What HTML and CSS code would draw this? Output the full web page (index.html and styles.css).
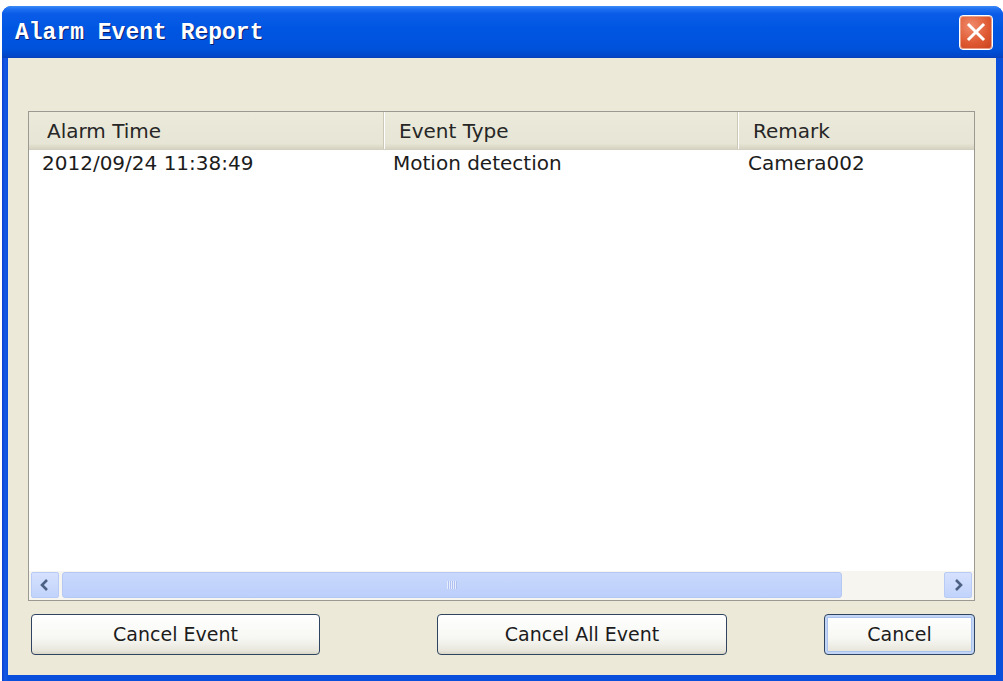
FILE: index.html
```html
<!DOCTYPE html>
<html>

<head>
  <title>Alarm Event Report</title>
  <link rel="stylesheet" href="styles.css">
</head>

<body>
  <div class="window">
    <div class="titlebar">
      <span class="title">Alarm Event Report</span>
      <button class="close" aria-label="Close">
        <svg width="20" height="20" viewBox="0 0 20 20">
          <path d="M3 3 L17 17 M17 3 L3 17" stroke="#fff" stroke-width="3" stroke-linecap="square"/>
        </svg>
      </button>
    </div>

    <div class="client">
      <div class="listview">
        <div class="list-head">
          <div class="col col-time">Alarm Time</div>
          <div class="col col-type">Event Type</div>
          <div class="col col-remark">Remark</div>
        </div>

        <div class="list-body">
          <div class="row">
            <div class="cell cell-time">2012/09/24 11:38:49</div>
            <div class="cell cell-type">Motion detection</div>
            <div class="cell cell-remark">Camera002</div>
          </div>
        </div>

        <div class="hscroll">
          <div class="sb-btn">
            <svg width="10" height="12" viewBox="0 0 10 12">
              <path d="M7 1 L2 6 L7 11" fill="none" stroke="#4d6185" stroke-width="2.6"/>
            </svg>
          </div>
          <div class="sb-thumb"><span class="grip"></span></div>
          <div class="sb-track"></div>
          <div class="sb-btn">
            <svg width="10" height="12" viewBox="0 0 10 12">
              <path d="M3 1 L8 6 L3 11" fill="none" stroke="#4d6185" stroke-width="2.6"/>
            </svg>
          </div>
        </div>
      </div>

      <div class="actions">
        <button class="btn btn-event">Cancel Event</button>
        <button class="btn btn-all">Cancel All Event</button>
        <button class="btn btn-cancel focused">Cancel</button>
      </div>
    </div>
  </div>
</body>

</html>
```

FILE: styles.css
```css
html {
  background-color: #fff;
}

body {
  margin: 0;
  font: 20px/1 "DejaVu Sans", sans-serif;
  color: #1c1c1c;
}

.window {
  margin: 6px 0 0 2px;
  width: 1001px;
  height: 675px;
  display: flex;
  flex-direction: column;
  background: linear-gradient(to right, #0a3fd0, #1458e4 3px, #0a4fdc 6px);
  border-radius: 9px 9px 0 0;
  overflow: hidden;
}

.titlebar {
  height: 52px;
  flex: none;
  display: flex;
  align-items: center;
  justify-content: space-between;
  padding: 0 10px 0 13px;
  background: linear-gradient(to bottom, #3b8cf6 0, #1e6ff0 3px, #0a5ce8 8px, #0056e2 22px, #0052dc 42px, #0048cc 49px, #0a3fb8 52px);
}

.title {
  font: bold 23px/1 "Liberation Mono", monospace;
  color: #fff;
  text-shadow: 1px 1px 0 #0a1e6e;
  margin-top: 2px;
}

.close {
  width: 34px;
  height: 35px;
  padding: 0;
  display: flex;
  align-items: center;
  justify-content: center;
  border: 1px solid #fff;
  border-radius: 4px;
  background: radial-gradient(circle at 35% 30%, #f08a6c, #df5a33 55%, #c8401c);
  box-shadow: inset 0 0 0 1px #e9a08a;
}

.client {
  flex: 1;
  margin: 0 7px 6px 6px;
  padding: 53px 21px 0 20px;
  background-color: #ece9d8;
  display: flex;
  flex-direction: column;
}

.listview {
  height: 490px;
  box-sizing: border-box;
  border: 1px solid #9a9a92;
  background-color: #fff;
  display: flex;
  flex-direction: column;
}

.list-head,
.row {
  display: grid;
  grid-template-columns: 354px 354px 1fr;
}

.list-head {
  height: 37px;
  background: linear-gradient(to bottom, #ebeadb, #e7e5d5 85%, #d6d3c2);
  border-bottom: 1px solid #d2d0c1;
}

.col {
  display: flex;
  align-items: center;
  padding-left: 15px;
  border-left: 1px solid #cbc8b8;
  box-shadow: inset 1px 0 0 #fff;
  color: #262626;
}

.col-time {
  padding-left: 18px;
  border-left: none;
  box-shadow: none;
}

.list-body {
  flex: 1;
}

.row {
  height: 26px;
  align-items: center;
}

.cell {
  padding-left: 10px;
}

.cell-time {
  padding-left: 13px;
}

.cell-remark {
  padding-left: 11px;
}

.hscroll {
  height: 26px;
  display: flex;
  padding: 1px 2px 2px 2px;
  background-color: #f6f5f0;
}

.sb-btn {
  width: 28px;
  flex: none;
  display: flex;
  align-items: center;
  justify-content: center;
  background: linear-gradient(to bottom, #d6e1fd, #c1d3fb);
  border: 1px solid #b8caf6;
  border-radius: 2px;
  box-sizing: border-box;
}

.sb-thumb {
  width: 780px;
  flex: none;
  margin-left: 3px;
  display: flex;
  align-items: center;
  justify-content: center;
  background: linear-gradient(to bottom, #c9d8fc, #bccffb);
  border: 1px solid #b5c8f4;
  border-radius: 3px;
  box-sizing: border-box;
}

.grip {
  width: 10px;
  height: 8px;
  background: repeating-linear-gradient(to right, #e4ecfe 0 1px, #aebff0 1px 2px);
}

.sb-track {
  flex: 1;
}

.actions {
  display: flex;
  margin-top: 13px;
  padding-left: 3px;
}

.btn {
  height: 41px;
  padding: 0;
  font: 19px/1 "DejaVu Sans", sans-serif;
  color: #1c1c1c;
  border: 1px solid #2f4460;
  border-radius: 4px;
  background: linear-gradient(to bottom, #ffffff, #f7f7f3 60%, #e8e6dc 92%, #d8d5c6);
}

.btn-event {
  width: 289px;
}

.btn-all {
  width: 290px;
  margin-left: 117px;
}

.btn-cancel {
  width: 151px;
  margin-left: 97px;
}

.focused {
  box-shadow: inset 0 0 0 2px #c2d5f5, inset 0 0 0 3px #a9c2ee;
}
```
